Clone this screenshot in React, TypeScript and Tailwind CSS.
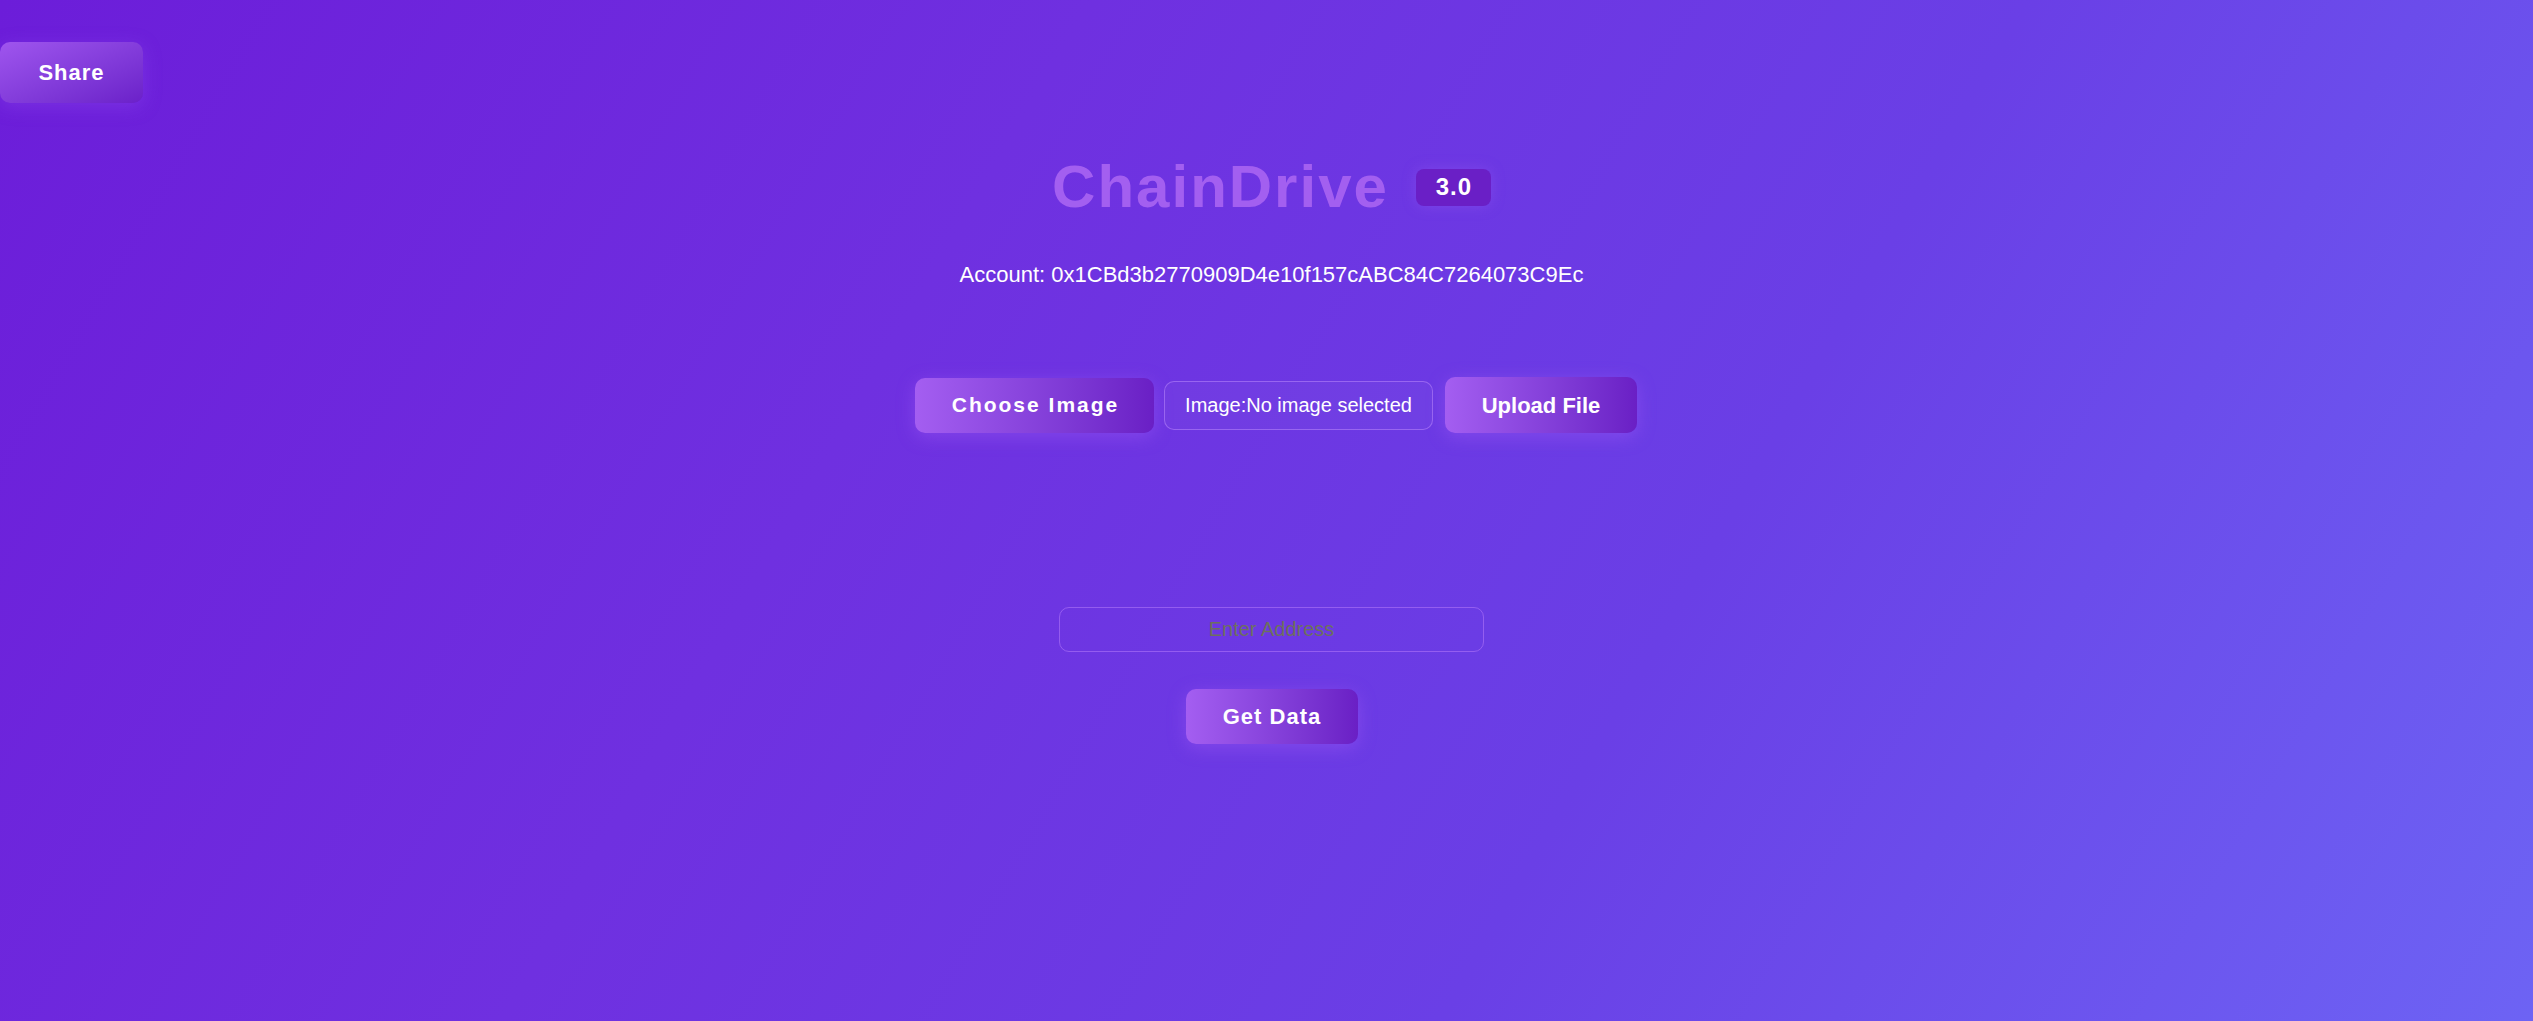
import React from 'react'

export default function App() {
  return (
    <main
      className="min-h-screen w-full flex flex-col bg-[linear-gradient(120deg,#6c1dd9_0%,#6f30e0_35%,#6a3fe6_65%,#6d63f4_100%)] font-['Liberation_Sans',Arial,sans-serif] text-white"
    >
      {/* Share button */}
      <button className="self-start mt-[42px] h-[61px] w-[143px] rounded-[10px] bg-gradient-to-br from-[#9f55ee] to-[#6b20c9] text-[22px] font-bold tracking-[1px] text-white shadow-[0_4px_18px_rgba(150,80,240,0.35)]">
        Share
      </button>

      <div className="flex flex-col items-center pl-[10px]">
        {/* Title */}
        <div className="mt-[54px] flex items-center gap-[27px]">
          <h1 className="text-[60px] leading-none font-bold tracking-[2px] text-[#a35ff0]">ChainDrive</h1>
          <span className="h-[37px] w-[75px] flex items-center justify-center rounded-[8px] bg-[#6a1fc6] text-[24px] font-bold tracking-[1px] pl-[1px] text-white shadow-[0_0_14px_rgba(150,90,240,0.4)]">
            3.0
          </span>
        </div>

        <p className="mt-[47px] text-[22px] leading-none text-white">
          Account: 0x1CBd3b2770909D4e10f157cABC84C7264073C9Ec
        </p>

        {/* Upload row */}
        <div className="mt-[91px] flex items-center pl-[9px]">
          <button className="h-[55px] w-[239px] rounded-[10px] bg-gradient-to-r from-[#a45ef1] to-[#6a1fc5] text-[21px] font-bold tracking-[2px] pl-[2px] text-white shadow-[0_4px_18px_rgba(160,90,245,0.45)]">
            Choose Image
          </button>
          <div className="ml-[10px] h-[49px] w-[269px] flex items-center justify-center rounded-[10px] border border-[#a978f5]/70 bg-white/[0.03] text-[20px] text-white">
            Image:No image selected
          </div>
          <button className="ml-[12px] h-[56px] w-[192px] rounded-[10px] bg-gradient-to-r from-[#a45ef1] to-[#6a1fc5] text-[22px] font-bold text-white shadow-[0_4px_18px_rgba(160,90,245,0.45)]">
            Upload File
          </button>
        </div>

        {/* Address lookup */}
        <input
          type="text"
          placeholder="Enter Address"
          className="mt-[174px] h-[45px] w-[425px] rounded-[10px] border border-[#a56cf5]/70 bg-transparent text-center text-[20px] text-white outline-none placeholder:text-[#6e705e]"
        />

        <button className="mt-[37px] h-[55px] w-[172px] rounded-[10px] bg-gradient-to-r from-[#a45ef1] to-[#6a1fc5] text-[22px] font-bold tracking-[1px] pl-[1px] text-white shadow-[0_4px_18px_rgba(160,90,245,0.45)]">
          Get Data
        </button>
      </div>
    </main>
  )
}
